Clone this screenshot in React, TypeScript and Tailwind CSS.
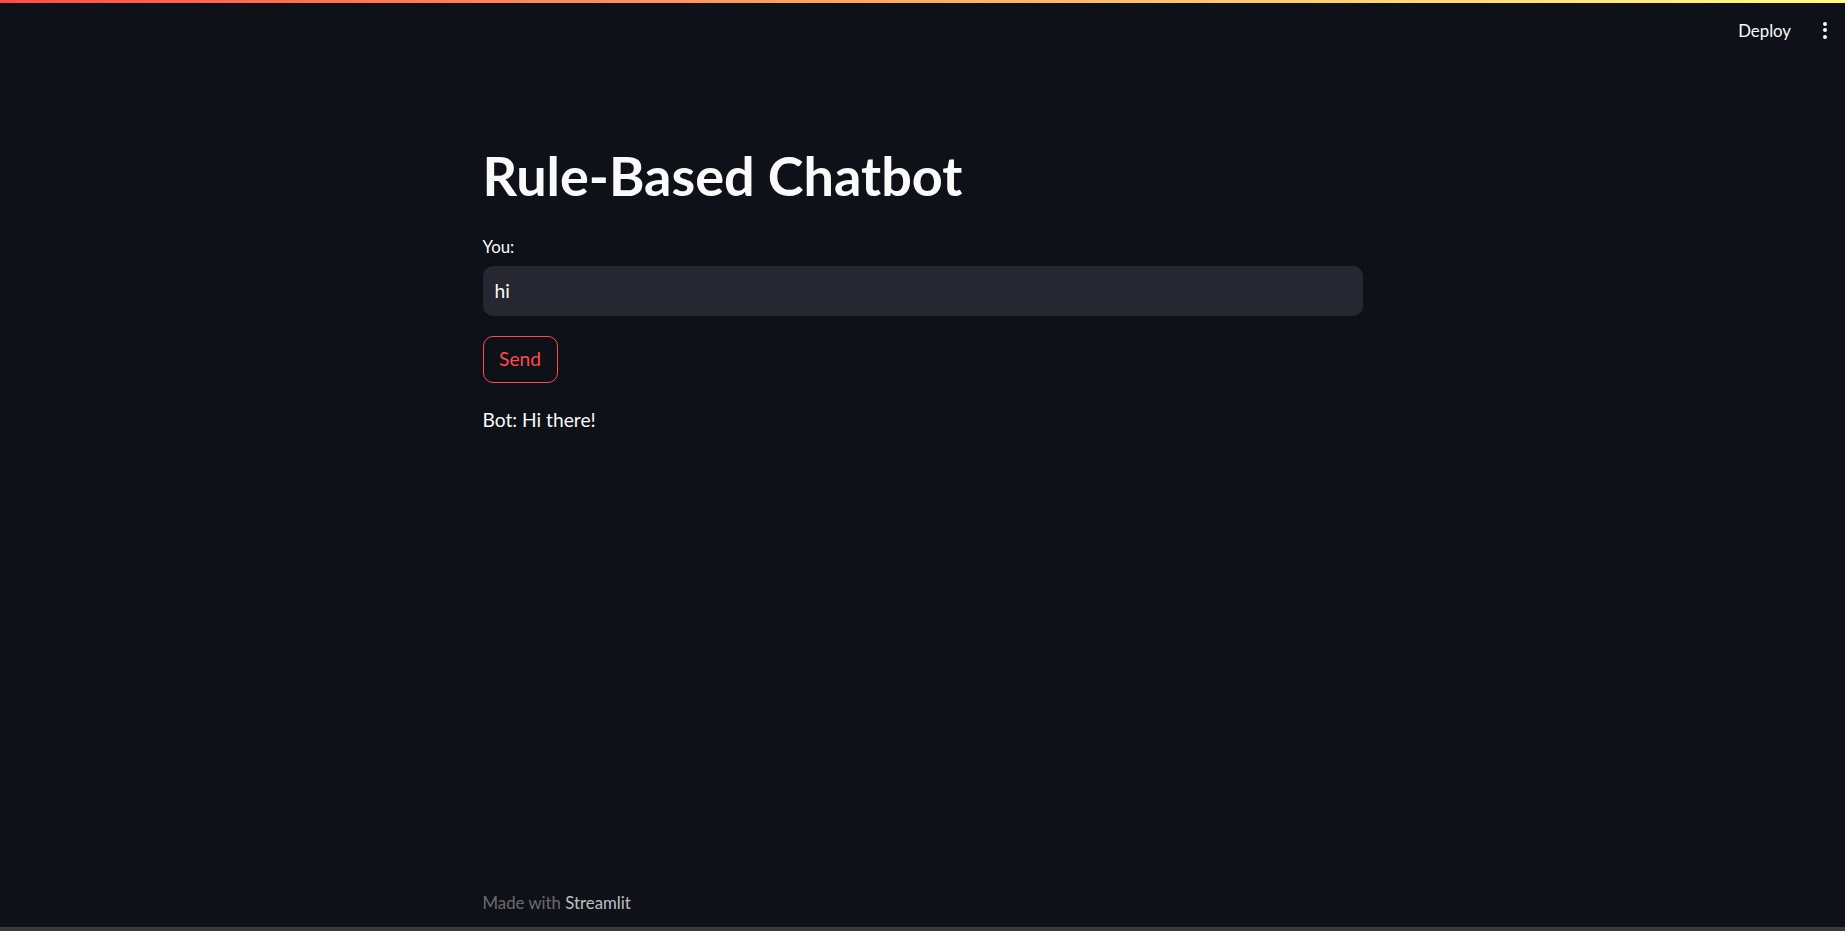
import React from "react";

export default function App() {
  return (
    <div
      className="relative w-full h-[931px] bg-[#0e1117] text-[#fafafa] flex flex-col overflow-hidden font-['Lato','Noto_Sans',sans-serif]"
    >
      <div className="h-[3px] w-full bg-gradient-to-r from-[#ff4b4b] to-[#fffd80] shrink-0" />
      <div className="absolute top-[3px] right-0 h-[56px] flex items-center">
        <span className="text-[16.8px] leading-none text-[#fafafa] mr-[32px]">Deploy</span>
        <div className="flex flex-col gap-[2.5px] mr-[18px] mb-[2px]">
          <span className="block w-[4px] h-[4px] rounded-full bg-[#fafafa]" />
          <span className="block w-[4px] h-[4px] rounded-full bg-[#fafafa]" />
          <span className="block w-[4px] h-[4px] rounded-full bg-[#fafafa]" />
        </div>
      </div>

      <main className="mx-auto w-[880px] flex flex-col flex-1">
        <h1 className="mt-[141px] text-[54px] leading-[64px] font-bold text-[#fafafa]">
          Rule-Based Chatbot
        </h1>
        <label className="mt-[29px] text-[16.8px] leading-[20px] text-[#fafafa]">You:</label>
        <div className="mt-[9px] h-[50px] rounded-[10px] bg-[#262730] flex items-center px-[12px]">
          <span className="text-[19.2px] text-[#fafafa]">hi</span>
        </div>
        <div className="mt-[20px]">
          <button className="h-[47px] w-[75px] rounded-[10px] border border-[#ff4b4b] text-[#ff4b4b] text-[19.2px] flex items-center justify-center bg-transparent">
            Send
          </button>
        </div>
        <p className="mt-[23px] text-[19.2px] leading-[28px] text-[#fafafa]">Bot: Hi there!</p>
        <div className="flex-1" />
        <div className="mb-[12px] text-[16.8px] leading-[24px]">
          <span className="text-[rgba(250,250,250,0.4)]">Made with </span>
          <span className="text-[rgba(250,250,250,0.75)]">Streamlit</span>
        </div>
      </main>
      <div className="h-[4px] w-full bg-[#3a3a3a] shrink-0" />
    </div>
  );
}
